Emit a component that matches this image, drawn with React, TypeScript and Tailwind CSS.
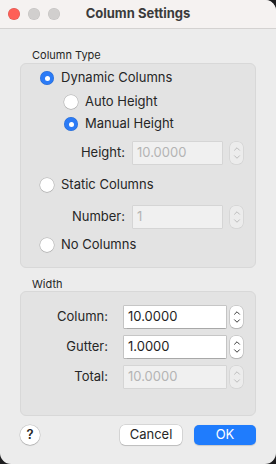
import { ChevronUp, ChevronDown } from 'lucide-react';

function Radio({ checked, label }: { checked?: boolean; label: string }) {
  return (
    <div className="flex items-center h-[20px] gap-[7px]">
      {checked ? (
        <span className="w-[14px] h-[14px] rounded-full bg-[#2b7bf6] flex items-center justify-center shadow-[inset_0_0_0_0.5px_rgba(0,0,0,0.15)]">
          <span className="w-[5px] h-[5px] rounded-full bg-white" />
        </span>
      ) : (
        <span className="w-[14px] h-[14px] rounded-full bg-white shadow-[0_0_0_0.5px_rgba(0,0,0,0.22),0_0.5px_1px_rgba(0,0,0,0.15)]" />
      )}
      <span className="text-[13px] text-[#262626]">{label}</span>
    </div>
  );
}

function Stepper({ disabled }: { disabled?: boolean }) {
  const color = disabled ? 'text-[#bdbdbd]' : 'text-[#3a3a3a]';
  return (
    <div
      className={`w-[13px] h-[22px] rounded-[5px] flex flex-col items-center justify-center ${
        disabled
          ? 'bg-[#ececec] shadow-[0_0_0_0.5px_rgba(0,0,0,0.1)]'
          : 'bg-white shadow-[0_0_0_0.5px_rgba(0,0,0,0.2),0_1px_1px_rgba(0,0,0,0.12)]'
      }`}
    >
      <ChevronUp size={10} strokeWidth={2.4} className={`${color} -mb-[1px]`} />
      <ChevronDown size={10} strokeWidth={2.4} className={`${color} -mt-[1px]`} />
    </div>
  );
}

function Field({
  label,
  value,
  disabled,
  labelW,
  inputW,
  gap,
}: {
  label: string;
  value: string;
  disabled?: boolean;
  labelW: string;
  inputW: string;
  gap: string;
}) {
  return (
    <div className="flex items-center">
      <span className={`${labelW} text-right text-[13px] text-[#262626]`}>{label}</span>
      <div
        className={`${inputW} ${gap} h-[22px] flex items-center px-[4px] text-[13px] ${
          disabled
            ? 'bg-[#f0f0f0] text-[#b4b4b4] shadow-[0_0_0_0.5px_rgba(0,0,0,0.12)]'
            : 'bg-white text-[#1e1e1e] shadow-[0_0_0_0.5px_rgba(0,0,0,0.25),0_0.5px_1px_rgba(0,0,0,0.15)]'
        }`}
      >
        {value}
      </div>
      <div className="ml-auto">
        <Stepper disabled={disabled} />
      </div>
    </div>
  );
}

export default function App() {
  return (
    <div className="w-[276px] h-[464px] bg-[#1d1d1f]" style={{ fontFamily: 'Inter, "Liberation Sans", sans-serif' }}>
      <div className="w-full h-full bg-[#ececec] rounded-tr-[11px] rounded-b-[11px] overflow-hidden flex flex-col">
        {/* Title bar */}
        <div className="h-[29px] bg-[#f5f2f1] border-b border-[#d4d2d1] grid grid-cols-[1fr_auto_1fr] items-center shrink-0">
          <div className="flex items-center gap-[8px] pl-[8px]">
            <span className="w-[12px] h-[12px] rounded-full bg-[#fe5f57] shadow-[inset_0_0_0_0.5px_rgba(0,0,0,0.15)]" />
            <span className="w-[12px] h-[12px] rounded-full bg-[#d1cfce] shadow-[inset_0_0_0_0.5px_rgba(0,0,0,0.08)]" />
            <span className="w-[12px] h-[12px] rounded-full bg-[#d1cfce] shadow-[inset_0_0_0_0.5px_rgba(0,0,0,0.08)]" />
          </div>
          <span className="text-[13px] font-bold text-[#3b3b3b]">Column Settings</span>
          <div />
        </div>

        {/* Body */}
        <div className="px-[20px] flex flex-col">
          <span className="mt-[19px] ml-[12px] h-[14px] leading-[14px] text-[11px] text-[#262626]">Column Type</span>
          <div className="mt-[1px] h-[205px] rounded-[6px] bg-[#e3e3e3] border border-[#d8d8d8] pt-[3px] pl-[19px] pr-[12px] flex flex-col">
            <div className="mt-[1px]">
              <Radio checked label="Dynamic Columns" />
            </div>
            <div className="pl-[24px] mt-[4px]">
              <Radio label="Auto Height" />
            </div>
            <div className="pl-[24px] mt-[2px]">
              <Radio checked label="Manual Height" />
            </div>
            <div className="mt-[8px]">
              <Field label="Height:" value="10.0000" disabled labelW="w-[85px]" inputW="w-[89px]" gap="ml-[8px]" />
            </div>
            <div className="mt-[11px]">
              <Radio label="Static Columns" />
            </div>
            <div className="mt-[11px]">
              <Field label="Number:" value="1" disabled labelW="w-[85px]" inputW="w-[89px]" gap="ml-[8px]" />
            </div>
            <div className="mt-[7px]">
              <Radio label="No Columns" />
            </div>
          </div>

          <span className="mt-[9px] ml-[12px] h-[14px] leading-[14px] text-[11px] text-[#262626]">Width</span>
          <div className="h-[125px] rounded-[6px] bg-[#e3e3e3] border border-[#d8d8d8] pt-[14px] pl-[19px] pr-[12px] flex flex-col gap-[8px]">
            <Field label="Column:" value="10.0000" labelW="w-[68px]" inputW="w-[102px]" gap="ml-[16px]" />
            <Field label="Gutter:" value="1.0000" labelW="w-[68px]" inputW="w-[102px]" gap="ml-[16px]" />
            <Field label="Total:" value="10.0000" disabled labelW="w-[68px]" inputW="w-[102px]" gap="ml-[16px]" />
          </div>

          {/* Buttons */}
          <div className="mt-[9px] flex items-center">
            <span className="w-[20px] h-[20px] rounded-full bg-white shadow-[0_0_0_0.5px_rgba(0,0,0,0.18),0_1px_1px_rgba(0,0,0,0.12)] flex items-center justify-center text-[13px] font-semibold text-[#262626]">
              ?
            </span>
            <span className="ml-auto w-[62px] h-[20px] rounded-[5px] bg-white shadow-[0_0_0_0.5px_rgba(0,0,0,0.18),0_1px_1px_rgba(0,0,0,0.12)] flex items-center justify-center text-[13px] text-[#262626]">
              Cancel
            </span>
            <span className="ml-[12px] w-[62px] h-[20px] rounded-[5px] bg-[#1f7cfd] shadow-[0_0.5px_1px_rgba(0,0,0,0.15)] flex items-center justify-center text-[13px] text-white">
              OK
            </span>
          </div>
        </div>
      </div>
    </div>
  );
}
